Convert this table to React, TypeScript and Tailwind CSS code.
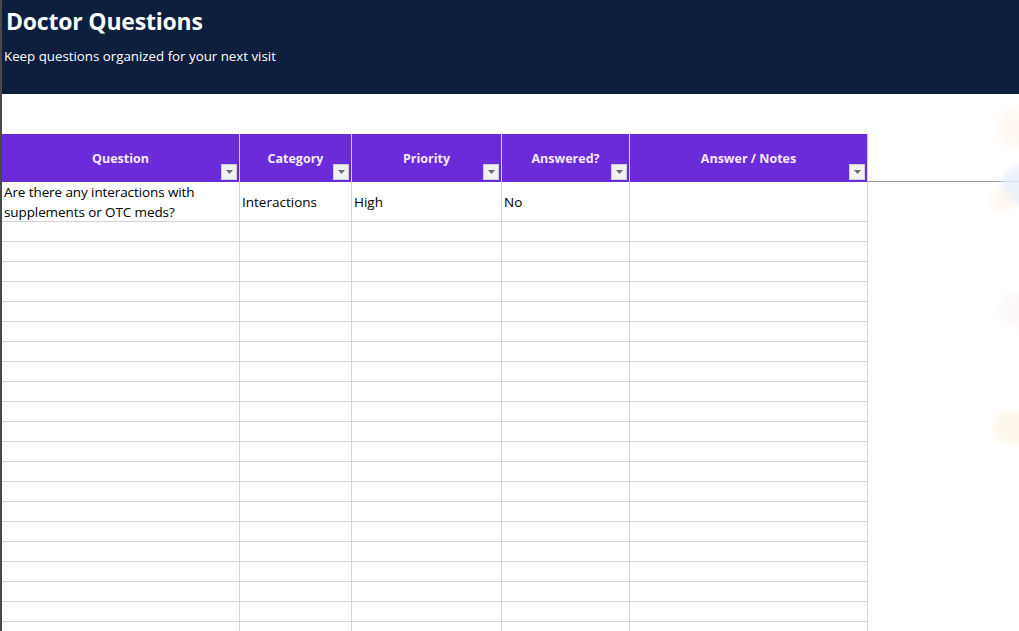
const columns = [
  { label: "Question", width: "w-[238px]" },
  { label: "Category", width: "w-[112px]" },
  { label: "Priority", width: "w-[150px]" },
  { label: "Answered?", width: "w-[128px]" },
  { label: "Answer / Notes", width: "w-[238px]" },
];

const blankRows = Array.from({ length: 22 });

function FilterButton() {
  return (
    <span className="absolute right-[2px] bottom-[2px] flex h-[16px] w-[16px] items-center justify-center border border-[#cfcfd6] bg-[#f2f2f5]">
      <svg width="7" height="4" viewBox="0 0 7 4">
        <path d="M0 0h7L3.5 4z" fill="#6a6a6a" />
      </svg>
    </span>
  );
}

export default function App() {
  return (
    <div
      className="relative h-[631px] w-[1019px] overflow-hidden border-l-2 border-[#4a4a4a] bg-white"
      style={{ fontFamily: '"Open Sans", "Liberation Sans", sans-serif' }}
    >
      {/* Title band */}
      <div className="h-[94px] bg-[#0d1f3c] px-[2px] pt-[4px] text-white">
        <h1 className="ml-[2px] text-[23px] font-bold leading-[34px] tracking-[-0.2px]">Doctor Questions</h1>
        <p className="mt-[9px] text-[13.3px] leading-[18px]">
          Keep questions organized for your next visit
        </p>
      </div>

      <div className="h-[40px]" />

      {/* Table header */}
      <div className="flex">
        {columns.map((c) => (
          <div
            key={c.label}
            className={`relative flex h-[48px] ${c.width} shrink-0 items-center justify-center border-r border-[#d8cdf0] bg-[#6c2bd9] pt-[2px] text-[12.5px] font-bold text-[#f6e9ff]`}
          >
            {c.label}
            <FilterButton />
          </div>
        ))}
        <div className="h-[48px] flex-1 border-b border-[#9a9a9a]" />
      </div>

      {/* First data row */}
      <div className="flex text-[13.5px] leading-[20px] text-black">
        <div className="h-[40px] w-[238px] shrink-0 border-r border-b border-[#d4d4d8] px-[2px] tracking-[-0.1px]">
          Are there any interactions with supplements or OTC meds?
        </div>
        <div className="flex h-[40px] w-[112px] shrink-0 items-center border-r border-b border-[#d4d4d8] px-[2px]">
          Interactions
        </div>
        <div className="flex h-[40px] w-[150px] shrink-0 items-center border-r border-b border-[#d4d4d8] px-[2px]">
          High
        </div>
        <div className="flex h-[40px] w-[128px] shrink-0 items-center border-r border-b border-[#d4d4d8] px-[2px]">
          No
        </div>
        <div className="h-[40px] w-[238px] shrink-0 border-r border-b border-[#d4d4d8]" />
      </div>

      {/* Empty rows */}
      {blankRows.map((_, i) => (
        <div key={i} className="flex">
          {columns.map((c) => (
            <div key={c.label} className={`h-[20px] ${c.width} shrink-0 border-r border-b border-[#d4d4d8]`} />
          ))}
        </div>
      ))}

      {/* faint decorative dots at the right edge */}
      <div className="pointer-events-none absolute top-[108px] right-[-18px] h-[40px] w-[40px] rounded-full bg-[#fff5ea] opacity-60 blur-[3px]" />
      <div className="pointer-events-none absolute top-[165px] right-[-22px] h-[40px] w-[40px] rounded-full bg-[#e8effb] opacity-80 blur-[3px]" />
      <div className="pointer-events-none absolute top-[190px] right-[6px] h-[22px] w-[22px] rounded-full bg-[#fff4e6] opacity-60 blur-[3px]" />
      <div className="pointer-events-none absolute top-[292px] right-[-16px] h-[36px] w-[36px] rounded-full bg-[#fcf3f8] opacity-60 blur-[3px]" />
      <div className="pointer-events-none absolute top-[410px] right-[-14px] h-[34px] w-[40px] rounded-full bg-[#fff5e8] opacity-80 blur-[3px]" />
    </div>
  );
}
